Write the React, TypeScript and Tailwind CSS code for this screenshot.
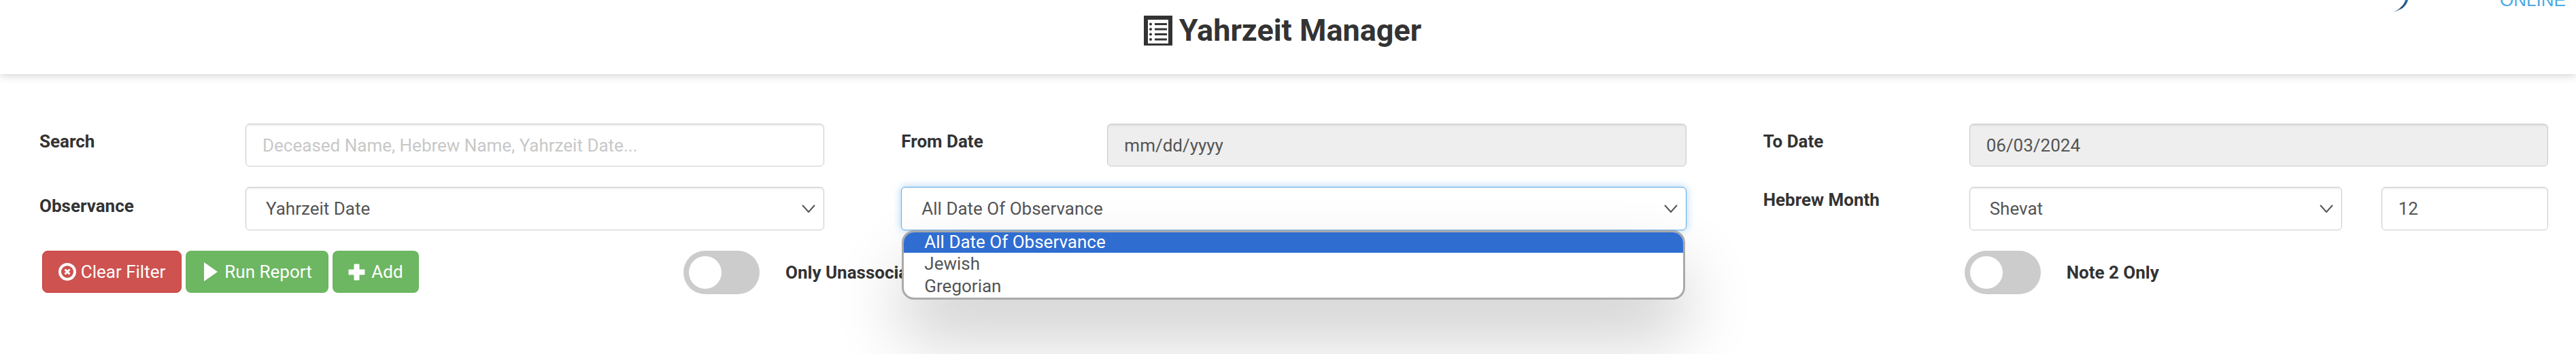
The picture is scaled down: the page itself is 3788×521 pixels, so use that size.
import React from 'react';

const ChevronDown = () => (
  <svg width="20" height="12" viewBox="0 0 20 12" fill="none" stroke="#555" strokeWidth="2" className="shrink-0">
    <path d="M1 1 L10 11 L19 1" />
  </svg>
);

const SelectBox = ({ label, focused }: { label: string; focused?: boolean }) => (
  <div
    className={`flex h-[64px] w-full items-center justify-between rounded-[6px] border bg-white pl-[29px] pr-[12px] text-[26px] text-[#555] ${
      focused
        ? 'border-[#66afe9] shadow-[inset_0_1px_1px_rgba(0,0,0,0.075),0_0_12px_rgba(102,175,233,0.6)]'
        : 'border-[#ccc] shadow-[inset_0_2px_2px_rgba(0,0,0,0.075)]'
    }`}
  >
    <span>{label}</span>
    <ChevronDown />
  </div>
);

const TextBox = ({ value, placeholder, disabled }: { value?: string; placeholder?: string; disabled?: boolean }) => (
  <input
    readOnly
    value={value}
    placeholder={placeholder}
    className={`h-[63px] w-full rounded-[6px] border border-[#ccc] px-[24px] text-[26px] text-[#555] shadow-[inset_0_2px_2px_rgba(0,0,0,0.075)] outline-none placeholder:text-[#c8c8c8] ${
      disabled ? 'bg-[#eee]' : 'bg-white'
    }`}
  />
);

const Toggle = () => (
  <div className="flex h-[64px] w-[112px] shrink-0 items-center rounded-full bg-[#ccc] pl-[8px]">
    <div className="h-[48px] w-[48px] rounded-full bg-white" />
  </div>
);

const Label = ({ children, className }: { children: React.ReactNode; className?: string }) => (
  <label className={`w-[303px] shrink-0 text-[26px] font-bold text-[#333] ${className ?? ''}`}>{children}</label>
);

export default function App() {
  return (
    <div className="relative h-[521px] w-full overflow-hidden bg-white font-['Roboto',sans-serif] text-[#333]">
      <header className="relative flex h-[109px] items-start justify-center bg-white pt-[19px] pr-[16px] shadow-[0_2px_12px_rgba(0,0,0,0.18)]">
        <div className="flex items-center gap-[10px]">
          <svg width="42" height="44" viewBox="0 0 42 44" className="shrink-0">
            <path fill="#333" fillRule="evenodd" d="M0 0h42v44H0z M6 6v35h30V6z" />
            <g fill="#333">
              <circle cx="10" cy="12.5" r="2" />
              <circle cx="10" cy="20" r="2" />
              <circle cx="10" cy="27.5" r="2" />
              <circle cx="10" cy="35" r="2" />
              <rect x="16" y="11" width="18" height="3" />
              <rect x="16" y="18.5" width="18" height="3" />
              <rect x="16" y="26" width="18" height="3" />
              <rect x="16" y="33.5" width="18" height="3" />
            </g>
          </svg>
          <h1 className="text-[45px] leading-[52px] font-bold text-[#333]">Yahrzeit Manager</h1>
        </div>
        <svg width="24" height="20" viewBox="0 0 24 20" className="absolute top-0 left-[3518px]">
          <defs>
            <linearGradient id="swoosh" x1="0" y1="1" x2="1" y2="0">
              <stop offset="0" stopColor="#c5ced8" />
              <stop offset="0.5" stopColor="#23476e" />
              <stop offset="1" stopColor="#2b6ea8" />
            </linearGradient>
          </defs>
          <path d="M0 18 C10 14 17 8 19 0 L23 0 C21 9 12 16 0 18z" fill="url(#swoosh)" />
        </svg>
        <span className="absolute top-[-17px] left-[3676px] font-['Liberation_Sans',sans-serif] text-[26px] leading-[34px] text-[#4aa9e3]">
          ONLINE
        </span>
      </header>

      <main className="mt-[73px] flex flex-col gap-[30px] pr-[41px] pl-[58px]">
        <div className="grid grid-cols-3 gap-x-[113px]">
          <div className="flex">
            <Label className="pt-[7px]">Search</Label>
            <TextBox placeholder="Deceased Name, Hebrew Name, Yahrzeit Date..." />
          </div>
          <div className="flex">
            <Label className="pt-[7px]">From Date</Label>
            <TextBox value="mm/dd/yyyy" disabled />
          </div>
          <div className="flex">
            <Label className="pt-[7px]">To Date</Label>
            <TextBox value="06/03/2024" disabled />
          </div>
        </div>

        <div className="grid grid-cols-3 gap-x-[113px]">
          <div className="flex">
            <Label className="pt-[9px]">Observance</Label>
            <SelectBox label="Yahrzeit Date" />
          </div>
          <div className="relative z-10">
            <SelectBox label="All Date Of Observance" focused />
            <ul className="absolute top-[64px] right-[2px] left-[1px] overflow-hidden rounded-[18px] border-[3px] border-[#aaa] bg-white text-[26px] leading-[33px] text-[#555] shadow-[0_54px_100px_rgba(0,0,0,0.2)]">
              <li className="h-[30px] bg-[#2f6dd1] pl-[30px] leading-[28px] text-white">All Date Of Observance</li>
              <li className="pl-[30px]">Jewish</li>
              <li className="pl-[30px]">Gregorian</li>
            </ul>
          </div>
          <div className="flex">
            <Label className="pt-0">Hebrew Month</Label>
            <div className="flex flex-1 gap-[58px]">
              <div className="w-[548px] shrink-0">
                <SelectBox label="Shevat" />
              </div>
              <input
                readOnly
                value="12"
                className="h-[64px] w-full min-w-0 rounded-[6px] border border-[#ccc] px-[24px] text-[26px] text-[#555] shadow-[inset_0_2px_2px_rgba(0,0,0,0.075)] outline-none"
              />
            </div>
          </div>
        </div>

        <div className="grid grid-cols-3 gap-x-[113px]">
          <div className="col-span-2 flex items-start">
            <div className="ml-[4px] flex gap-[6px] text-[26px] text-white">
              <button className="flex h-[62px] w-[205px] items-center justify-center gap-[7px] rounded-[8px] border border-[#c9403c] bg-[#cd5250]">
                <svg width="26" height="26" viewBox="0 0 26 26" fill="none" stroke="#fff">
                  <circle cx="13" cy="13" r="11" strokeWidth="4" />
                  <path d="M9.5 9.5 L16.5 16.5 M16.5 9.5 L9.5 16.5" strokeWidth="3" />
                </svg>
                Clear Filter
              </button>
              <button className="flex h-[62px] w-[210px] items-center justify-center gap-[10px] rounded-[8px] bg-[#6db662] pl-[3px]">
                <svg width="20" height="28" viewBox="0 0 20 28" fill="#fff">
                  <path d="M0 0 L20 14 L0 28z" />
                </svg>
                Run Report
              </button>
              <button className="flex h-[62px] w-[127px] items-center justify-center gap-[9px] rounded-[8px] bg-[#6db662]">
                <svg width="25" height="25" viewBox="0 0 25 25" fill="#fff">
                  <path d="M8.5 1.5a1 1 0 0 1 1-1h6a1 1 0 0 1 1 1v7h7a1 1 0 0 1 1 1v6a1 1 0 0 1-1 1h-7v7a1 1 0 0 1-1 1h-6a1 1 0 0 1-1-1v-7h-7a1 1 0 0 1-1-1v-6a1 1 0 0 1 1-1h7z" />
                </svg>
                Add
              </button>
            </div>
            <div className="ml-[389px] flex items-center gap-[38px] whitespace-nowrap">
              <Toggle />
              <span className="text-[26px] font-bold text-[#333]">Only Unassociated</span>
            </div>
          </div>
          <div className="flex pl-[296px]">
            <div className="flex items-center gap-[38px]">
              <Toggle />
              <span className="text-[26px] font-bold text-[#333]">Note 2 Only</span>
            </div>
          </div>
        </div>
      </main>
    </div>
  );
}
